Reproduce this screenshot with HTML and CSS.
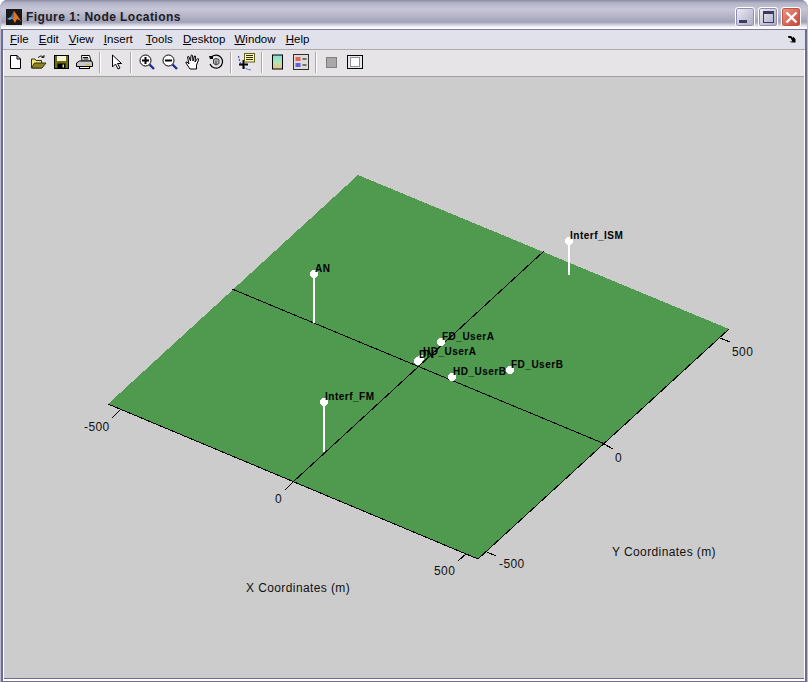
FILE: index.html
```html
<!DOCTYPE html>
<html lang="en">
<head>
  <meta charset="UTF-8">
  <title>Figure 1: Node Locations</title>
  <link rel="stylesheet" href="styles.css">
</head>
<body>
  <div class="window">
    <div class="titlebar">
      <svg class="app-icon" width="16" height="16" viewBox="0 0 16 16">
        <rect width="16" height="16" fill="#1a1a1a"/>
        <path d="M1 10 L5 8 L8 2 L11 6 L15 12 L11 10 L9 14 L6 9 Z" fill="#e8701a"/>
        <path d="M1 10 L5 8 L7 9 L4 11 Z" fill="#4fa6e0"/>
        <path d="M5 8 L8 2 L8 7 L7 9 Z" fill="#2a78c0"/>
      </svg>
      <span class="title">Figure 1: Node Locations</span>
      <div class="win-buttons">
        <div class="win-btn"><span class="min-glyph"></span></div>
        <div class="win-btn"><span class="max-glyph"></span></div>
        <div class="win-btn close">
          <svg width="13" height="13" viewBox="0 0 13 13"><path d="M1.5 1.5 L11.5 11.5 M11.5 1.5 L1.5 11.5" stroke="#fff" stroke-width="2.4"/></svg>
        </div>
      </div>
    </div>
    <div class="inner">
      <div class="menubar">
        <span class="menu-item"><u>F</u>ile</span>
        <span class="menu-item"><u>E</u>dit</span>
        <span class="menu-item"><u>V</u>iew</span>
        <span class="menu-item"><u>I</u>nsert</span>
        <span class="menu-item menu-tools"><u>T</u>ools</span>
        <span class="menu-item"><u>D</u>esktop</span>
        <span class="menu-item menu-window"><u>W</u>indow</span>
        <span class="menu-item"><u>H</u>elp</span>
        <svg class="dock" width="8" height="7" viewBox="0 0 8 7"><path d="M0 0 H3 L5 2 V0.500 L7.500 3 V6.500 H3.500 L1.500 5.500 H4.500 L2.500 2 H0.500 Z" fill="#000"/></svg>
      </div>
      <div class="toolbar">
        <!-- new -->
        <span class="slot"><svg width="13" height="16" viewBox="0 0 13 16"><path d="M1.5 1.5 H8 L11.5 5 V14.5 H1.5 Z" fill="#fff" stroke="#000"/><path d="M8 1.5 V5 H11.5" fill="none" stroke="#000"/></svg></span>
        <!-- open -->
        <span class="slot"><svg width="17" height="16" viewBox="0 0 17 16"><path d="M1.500 5 H5 L6 6.500 H11.500 V14 H1.500 Z" fill="#f4e878" stroke="#303010"/><path d="M1.500 14 L4.500 9 H16 L12 14 Z" fill="#8c8420" stroke="#303010"/><path d="M8 3.500 Q11 0.500 14 3 M14 1 V3.500 H11.500" fill="none" stroke="#202020"/></svg></span>
        <!-- save -->
        <span class="slot"><svg width="15" height="16" viewBox="0 0 15 16"><rect x="0.500" y="1.500" width="14" height="13" fill="#6c6c10" stroke="#000"/><rect x="3" y="2" width="9" height="5" fill="#f4f4d8"/><rect x="3.500" y="9.500" width="8" height="5" fill="#000"/><rect x="8.500" y="10.500" width="1.500" height="3" fill="#d8d8b0"/></svg></span>
        <!-- print -->
        <span class="slot"><svg width="17" height="16" viewBox="0 0 17 16"><path d="M5.500 1.500 H13.500 L15 7 H6 Z" fill="#fff" stroke="#000"/><path d="M3.500 7 H15.500 L16.500 9 V12.500 H0.500 V9 Z" fill="#c8c8c8" stroke="#000"/><rect x="3.500" y="12.500" width="10" height="2" fill="#fff" stroke="#000"/><rect x="9" y="10" width="5" height="1" fill="#e0c020"/><path d="M7 3.500 H12 M7.500 5 H12.500" stroke="#000"/></svg></span>
        <span class="sep"></span>
        <!-- pointer -->
        <span class="slot pointer"><svg width="11" height="16" viewBox="0 0 11 16"><path d="M1.500 1 V13 L4.500 10 L7 15 L9 14 L6.500 9.500 H10.500 Z" fill="#fff" stroke="#000"/></svg></span>
        <span class="sep"></span>
        <!-- zoom in -->
        <span class="slot"><svg width="16" height="16" viewBox="0 0 16 16"><circle cx="6.500" cy="6.500" r="5.500" fill="#fff" stroke="#000"/><path d="M3 6.500 H10 M6.500 3 V10" stroke="#000" stroke-width="2"/><path d="M10.500 10.500 L15 15" stroke="#1c2c90" stroke-width="2.400"/></svg></span>
        <!-- zoom out -->
        <span class="slot"><svg width="16" height="16" viewBox="0 0 16 16"><circle cx="6.500" cy="6.500" r="5.500" fill="#fff" stroke="#000"/><path d="M3 6.500 H10" stroke="#000" stroke-width="2"/><path d="M10.500 10.500 L15 15" stroke="#1c2c90" stroke-width="2.400"/></svg></span>
        <!-- hand -->
        <span class="slot"><svg width="17" height="16" viewBox="0 0 17 16"><path d="M6 15 L2 9 Q1.500 7.500 3 8 L5 10 L3.500 3 Q4 1.500 5 3 L6.500 7 L7 1.500 Q8 0.500 8.500 1.500 L9 7 L10.500 2 Q11.500 1.500 11.500 3 L11 8 L13.500 4.500 Q15 4.500 14.500 6 L12.500 11 V15 Z" fill="#fff" stroke="#000"/></svg></span>
        <!-- rotate -->
        <span class="slot"><svg width="16" height="16" viewBox="0 0 16 16"><path d="M3 3.500 A6.500 6.500 0 1 1 2 10" fill="none" stroke="#000" stroke-width="1.200"/><path d="M1 2 H5 V5 H2 Z" fill="#000"/><path d="M5.500 5.500 L8 4.500 L11 5.500 V9.500 L8 11 L5.500 9.500 Z" fill="#b0b0b8" stroke="#404040"/><path d="M8 6.500 V11" stroke="#404040"/></svg></span>
        <span class="sep"></span>
        <!-- data cursor -->
        <span class="slot"><svg width="17" height="18" viewBox="0 0 17 18"><path d="M0.500 3 Q1.500 9 4 12.500 Q7 16 13 17" fill="none" stroke="#1c3cc0" stroke-dasharray="2 1"/><path d="M1 11.500 H10 M5.500 7 V16" stroke="#000" stroke-width="2"/><rect x="6.500" y="0.500" width="10" height="8.500" fill="#fff8b0" stroke="#606020"/><path d="M8 2.500 H15 M8 4.500 H15 M8 6.500 H15" stroke="#303010"/></svg></span>
        <span class="sep"></span>
        <!-- colorbar -->
        <span class="slot"><svg width="11" height="16" viewBox="0 0 11 16">
          <defs><linearGradient id="bar" x1="0" y1="0" x2="0" y2="1"><stop offset="0" stop-color="#80d8e8"/><stop offset="0.500" stop-color="#b0e8b0"/><stop offset="1" stop-color="#f0c080"/></linearGradient></defs>
          <rect x="0.500" y="1" width="10" height="14" fill="url(#bar)" stroke="#000"/>
        </svg></span>
        <!-- legend -->
        <span class="slot"><svg width="16" height="16" viewBox="0 0 16 16"><rect x="0.500" y="0.500" width="15" height="15" fill="#dcdcd4" stroke="#303030"/><rect x="2.500" y="3" width="5" height="4" fill="#e86060"/><rect x="2.500" y="9" width="5" height="4" fill="#6060e0"/><path d="M9.500 5 H13.500 M9.500 11 H13.500" stroke="#000"/></svg></span>
        <span class="sep"></span>
        <!-- hide tools -->
        <span class="slot"><svg width="11" height="11" viewBox="0 0 11 11"><rect x="0.500" y="0.500" width="10" height="10" fill="#a8a8a8" stroke="#808080"/></svg></span>
        <!-- show tools -->
        <span class="slot"><svg width="16" height="14" viewBox="0 0 16 14"><rect x="0.500" y="0.500" width="15" height="13" fill="#e8e8f0" stroke="#000"/><rect x="3.500" y="2.500" width="9" height="9" fill="#fff" stroke="#909090"/></svg></span>
      </div>
      <div class="canvas">
        <svg class="plot" width="800" height="601" viewBox="4 77 800 601">
          <polygon class="ground" points="358,175 729,329 478,559 108,404"/>
          <g class="axis-lines">
            <line x1="108" y1="404" x2="478" y2="559"/>
            <line x1="478" y1="559" x2="729" y2="329"/>
            <line x1="232" y1="289" x2="605" y2="444"/>
            <line x1="544" y1="251" x2="293" y2="482"/>
            <line x1="120" y1="410" x2="112" y2="418"/>
            <line x1="293" y1="482" x2="285" y2="490"/>
            <line x1="466" y1="554" x2="458" y2="561"/>
            <line x1="487" y1="552" x2="496" y2="556"/>
            <line x1="604" y1="444" x2="613" y2="449"/>
            <line x1="720" y1="338" x2="730" y2="342"/>
          </g>
          <g class="stems">
            <line x1="314" y1="274" x2="314" y2="323"/>
            <line x1="569" y1="241" x2="569" y2="275"/>
            <line x1="324" y1="402" x2="324" y2="452"/>
          </g>
          <g class="nodes">
            <circle cx="314" cy="274" r="4"/>
            <circle cx="569" cy="241" r="4"/>
            <circle cx="324" cy="402" r="4"/>
            <circle cx="441" cy="342" r="4"/>
            <circle cx="418" cy="361" r="4"/>
            <circle cx="421" cy="358" r="3"/>
            <circle cx="452" cy="377" r="4"/>
            <circle cx="510" cy="370" r="4"/>
          </g>
          <g class="node-labels">
            <text x="315" y="272">AN</text>
            <text x="570" y="239">Interf_ISM</text>
            <text x="325" y="400">Interf_FM</text>
            <text x="442" y="340">FD_UserA</text>
            <text x="423" y="355">HD_UserA</text>
            <text x="419" y="358">DN</text>
            <text x="453" y="375">HD_UserB</text>
            <text x="511" y="368">FD_UserB</text>
          </g>
          <g class="tick-labels">
            <text x="84" y="431">-500</text>
            <text x="275" y="503">0</text>
            <text x="434" y="575">500</text>
            <text x="499" y="568">-500</text>
            <text x="615" y="462">0</text>
            <text x="732" y="356">500</text>
            <text x="246" y="592">X Coordinates (m)</text>
            <text x="612" y="556">Y Coordinates (m)</text>
          </g>
        </svg>
      </div>
    </div>
  </div>
</body>
</html>
```

FILE: styles.css
```css
html, body {
  margin: 0;
  padding: 0;
  overflow: hidden;
}
body {
  font-family: "Liberation Sans", Arial, sans-serif;
  background: #fff;
}
.window {
  width: 808px;
  height: 682px;
  box-sizing: border-box;
  display: flex;
  flex-direction: column;
  padding-bottom: 1px;
  background: #6c6c94;
  border-left: 1px solid #bcbcd0;
  border-right: 1px solid #bcbcd0;
  border-radius: 7px 7px 0 0;
  overflow: hidden;
}
.titlebar {
  height: 29px;
  flex: none;
  margin: 0 -1px;
  display: flex;
  align-items: center;
  padding: 5px 7px 0 6px;
  box-sizing: border-box;
  background: linear-gradient(to bottom, #8a8aa6 0, #b4b4c8 3px, #c6c6d6 9px, #b2b2c6 17px, #a0a0b8 22px, #e4e4ec 26px, #ffffff 28px);
}
.app-icon {
  flex: none;
  margin-right: 4px;
}
.title {
  font-size: 12px;
  font-weight: bold;
  letter-spacing: 0.45px;
  color: #1c1c24;
  text-shadow: 1px 1px 0 #a8a8bc;
}
.win-buttons {
  margin-left: auto;
  display: flex;
  gap: 3px;
}
.win-btn {
  width: 20px;
  height: 20px;
  box-sizing: border-box;
  border: 1px solid #fff;
  border-radius: 3px;
  background: linear-gradient(135deg, #f0f0f6, #a8a8c4);
  display: flex;
  align-items: center;
  justify-content: center;
  box-shadow: inset 0 0 0 1px #8e8eb0;
}
.win-btn.close {
  background: linear-gradient(135deg, #ee9a88, #c83c30);
  box-shadow: inset 0 0 0 1px #b85848;
}
.min-glyph {
  width: 8px;
  height: 3px;
  background: #3c3c60;
  margin: 8px 4px 0 0;
}
.max-glyph {
  width: 9px;
  height: 8px;
  border: 1px solid #3c3c60;
  border-top-width: 3px;
}
.inner {
  flex: 1;
  min-height: 0;
  display: flex;
  flex-direction: column;
  margin: 0 2px;
  border-left: 1px solid #fff;
  border-right: 1px solid #fff;
  border-bottom: 2px solid #fff;
}
.menubar {
  height: 21px;
  flex: none;
  box-sizing: border-box;
  margin: 0 -1px;
  display: flex;
  align-items: center;
  padding: 1px 0 2px 7px;
  background: #e0e1ea;
  border-top: 1px solid #7c7ca0;
  border-bottom: 1px solid #aaa;
  font-size: 11.5px;
  letter-spacing: 0.05px;
  color: #000;
  gap: 10px;
}
.menu-item {
  white-space: nowrap;
}
.menu-tools {
  margin-left: 3px;
}
.menu-window {
  margin-left: -1px;
}
.dock {
  margin-left: auto;
  margin-right: 9px;
}
.toolbar {
  height: 27px;
  flex: none;
  box-sizing: border-box;
  display: flex;
  align-items: center;
  padding-bottom: 2px;
  background: #e6e4e6;
  border-bottom: 1px solid #a0a0a0;
}
.slot {
  width: 23px;
  flex: none;
  display: flex;
  align-items: center;
  justify-content: center;
}
.slot.pointer {
  padding-left: 2px;
  box-sizing: border-box;
}
.sep {
  width: 2px;
  height: 21px;
  flex: none;
  background: linear-gradient(to right, #a8a8a8 50%, #fff 50%);
  margin: 0 3px;
}
.canvas {
  flex: 1;
  min-height: 0;
  background: #cccccc;
  border-bottom: 1px solid #6c6c94;
  overflow: hidden;
}
.plot {
  display: block;
}
.ground {
  fill: #4f9a4f;
  shape-rendering: crispEdges;
}
.axis-lines line {
  stroke: #000;
  stroke-width: 1;
  shape-rendering: crispEdges;
}
.stems line {
  stroke: #fff;
  stroke-width: 2;
  shape-rendering: crispEdges;
}
.nodes circle {
  fill: #fff;
  shape-rendering: crispEdges;
}
.node-labels text {
  font-size: 10px;
  font-weight: bold;
  fill: #000;
  letter-spacing: 0.5px;
}
.tick-labels text {
  font-size: 12px;
  fill: #111;
  letter-spacing: 0.4px;
}
```
